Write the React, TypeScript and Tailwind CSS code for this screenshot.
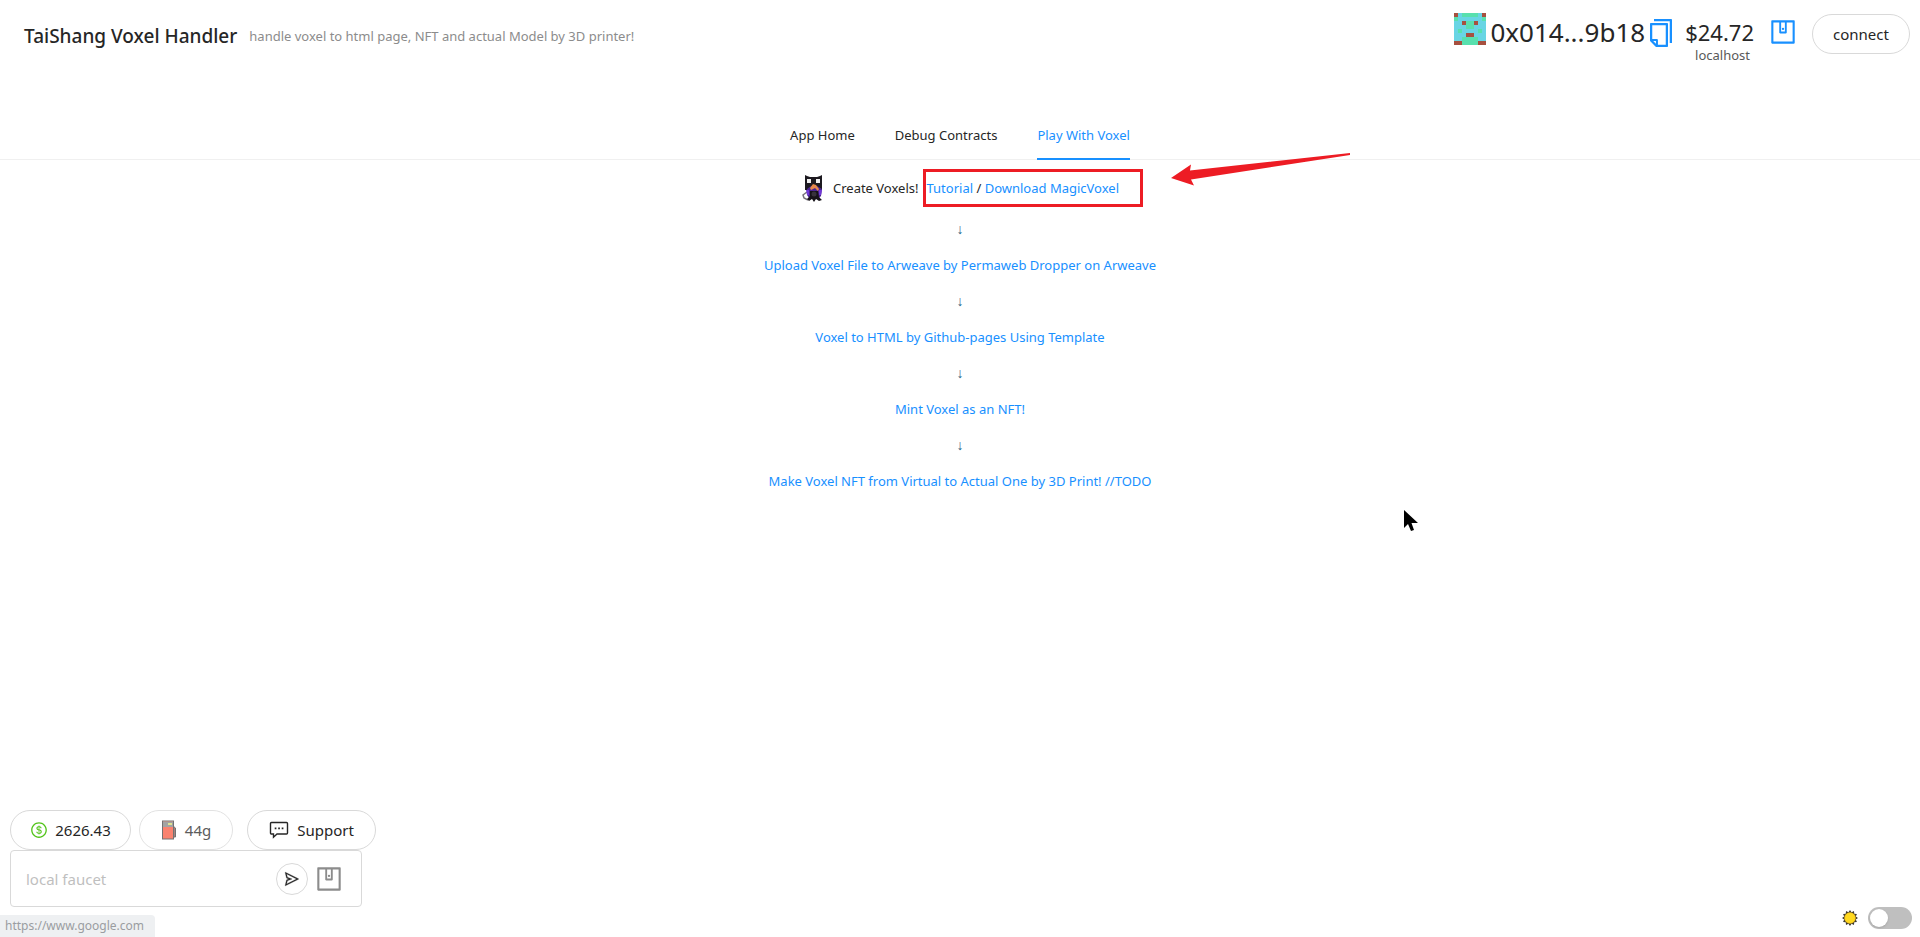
import { useState } from "react";
import type { ReactNode } from "react";
import { AiOutlineCopy, AiOutlineDollar, AiOutlineSend, AiOutlineWallet } from "react-icons/ai";

const FACE_ROWS = [
  "RTGGGGTR",
  "GTTTTTTG",
  "TTRGGRTT",
  "TTTGGTTT",
  "TGTTTTGT",
  "TTTRRTTT",
  "TTGGGGTT",
  "RRGGGGRR",
];
const FACE_COLORS: Record<string, string> = { R: "#a6503f", T: "#68d5e4", G: "#58e0ae" };

function Blockie() {
  return (
    <svg className="mt-[13px] size-8" viewBox="0 0 8 8" shapeRendering="crispEdges" aria-hidden="true">
      {FACE_ROWS.flatMap((row, y) =>
        row.split("").map((c, x) => (
          <rect key={`${x}-${y}`} x={x} y={y} width="1" height="1" fill={FACE_COLORS[c]} />
        )),
      )}
    </svg>
  );
}

function CatIcon() {
  return (
    <svg className="h-8 w-6" viewBox="0 0 24 32" aria-hidden="true">
      <path d="M6 20l-4 3 1 3 4 2" fill="none" stroke="#77727c" strokeWidth="1.500" />
      <path d="M4 3l2 1 3 1h7l3-1 2-1v15H4z" fill="#1d1a20" />
      <path d="M6 17l4-3h6l5 3-1 7-2 2H8l-2-3z" fill="#4b2493" />
      <path d="M9 16l3-4 3 1 3 4-1 2-3-3-4 2z" fill="#e88a4c" />
      <path d="M9 19h8l1 6 3 3-3 1-3-2-2 3-2-3-3 2-2-2 3-3z" fill="#171319" />
      <path d="M6 7h4v4H6zM15 7h4v4h-4z" fill="#f1f1f1" />
      <path d="M5 18h3v5H6zM18 18h3l-1 5h-2z" fill="#7138d6" />
      <circle cx="13" cy="22" r="2.500" fill="#38323c" />
    </svg>
  );
}

function GasPump() {
  return (
    <svg className="h-5 w-4" viewBox="0 0 16 20" aria-hidden="true">
      <path d="M12 6l2.500 2v9H12" fill="#8b5a55" stroke="#444" />
      <rect x="1.500" y="1" width="11" height="18" fill="#f9593f" stroke="#444" />
      <rect x="2" y="1.500" width="10" height="5.500" fill="#858585" />
      <rect x="7" y="3" width="4" height="2" fill="#d5dc6a" />
    </svg>
  );
}

function MessageIcon() {
  return (
    <svg className="size-5" viewBox="0 0 20 20" aria-hidden="true">
      <path
        d="M2.500 2.500h15a1 1 0 0 1 1 1v9.500a1 1 0 0 1-1 1H8L4.500 17.200V14h-2a1 1 0 0 1-1-1V3.500a1 1 0 0 1 1-1Z"
        fill="none"
        stroke="currentColor"
        strokeWidth="1.400"
      />
      <path d="M5.700 7.500h1.700v1.700H5.700zM9.200 7.500h1.700v1.700H9.200zM12.700 7.500h1.700v1.700h-1.700z" fill="currentColor" />
    </svg>
  );
}

function SunIcon() {
  const points = Array.from({ length: 24 }, (_, i) => {
    const r = i % 2 ? 6 : 8;
    const a = (i * Math.PI) / 12;
    return `${8 + r * Math.cos(a)},${8 + r * Math.sin(a)}`;
  }).join(" ");
  return (
    <svg className="size-4" viewBox="0 0 16 16" aria-hidden="true">
      <polygon points={points} fill="#3d3a30" />
      <circle cx="8" cy="8" r="5.800" fill="#e9b91c" />
      <circle cx="8" cy="8" r="5" fill="#ffd91f" />
    </svg>
  );
}

function Pill({ children, className }: { children: ReactNode; className: string }) {
  return (
    <button
      type="button"
      className={`flex h-10 items-center justify-center rounded-full border border-[#d9d9d9] bg-white text-[15px] ${className}`}
    >
      {children}
    </button>
  );
}

const TABS = ["App Home", "Debug Contracts", "Play With Voxel"];
const STEPS = [
  "Upload Voxel File to Arweave by Permaweb Dropper on Arweave",
  "Voxel to HTML by Github-pages Using Template",
  "Mint Voxel as an NFT!",
  "Make Voxel NFT from Virtual to Actual One by 3D Print! //TODO",
];

export default function App() {
  const [dark, setDark] = useState(false);
  return (
    <div className="relative flex min-h-screen flex-col bg-white font-['Noto_Sans','Open_Sans',sans-serif] text-[13px] leading-[22px] text-[#262626]">
      <header className="flex h-[110px] items-start justify-between pr-[10px] pl-6">
        <div className="flex items-center gap-3 pt-5">
          <h1 className="text-[19px] leading-8 font-medium">TaiShang Voxel Handler</h1>
          <p className="text-[#8c8c8c]">handle voxel to html page, NFT and actual Model by 3D printer!</p>
        </div>
        <div className="flex items-start">
          <div className="flex items-start gap-1">
            <Blockie />
            <span className="mt-4 text-[26px] leading-8">0x014...9b18</span>
          </div>
          <button type="button" aria-label="Copy address" className="mt-[17px] text-[#1890ff]">
            <AiOutlineCopy className="size-8" />
          </button>
          <div className="flex flex-col items-end pt-4 pl-2">
            <span className="text-[22px] leading-8">$24.72</span>
            <span className="-mt-1 pr-1 text-[#595959]">localhost</span>
          </div>
          <button type="button" aria-label="Wallet" className="mt-[17px] ml-[14px] text-[#1890ff]">
            <AiOutlineWallet className="size-[30px] -rotate-90" />
          </button>
          <div className="ml-[14px] pt-[14px]">
            <Pill className="w-[98px]">connect</Pill>
          </div>
        </div>
      </header>

      <nav className="flex h-[50px] justify-center gap-10 border-b border-[#f0f0f0]">
        {TABS.map((tab) => (
          <a
            key={tab}
            href="#"
            className={
              tab === "Play With Voxel"
                ? "-mb-px border-b-2 border-[#1890ff] pt-[14px] text-[#1890ff]"
                : "pt-[14px]"
            }
          >
            {tab}
          </a>
        ))}
      </nav>

      <main className="flex flex-col items-center">
        <div className="flex h-[58px] items-center pb-[2px]">
          <CatIcon />
          <span className="ml-2">Create Voxels!</span>
          <span className="relative ml-2">
            <a href="#" className="text-[#1890ff]">Tutorial</a> /{" "}
            <a href="#" className="text-[#1890ff]">Download MagicVoxel</a>
            <span className="pointer-events-none absolute -top-2 -right-6 -bottom-2 -left-1 border-3 border-[#ed1c24]" />
            <svg
              className="pointer-events-none absolute -top-[25px] left-full ml-[50px] h-9 w-[184px]"
              viewBox="0 0 184 36"
              aria-hidden="true"
            >
              <path d="M2 26L22 12.500L21 18.500L181 1V3L22 27.500L25 33.500Z" fill="#ed1c24" />
            </svg>
          </span>
        </div>
        {STEPS.map((step) => (
          <div key={step} className="flex flex-col items-center">
            <span className="h-9 font-['Liberation_Sans',sans-serif] text-sm leading-[22px] text-[#1f5f86]">↓</span>
            <a href="#" className="h-9 text-[#1890ff]">{step}</a>
          </div>
        ))}
      </main>

      <svg className="absolute top-[509px] left-[1404px] h-[23px] w-4" viewBox="0 0 16 23" aria-hidden="true">
        <path d="M0 1V19L4 15L7 22L10 21L7.500 14H14Z" fill="#000" />
      </svg>

      <footer className="mt-auto flex items-end justify-between">
        <div>
          <div className="flex pl-[10px]">
            <Pill className="w-[121px] gap-[7px]">
              <AiOutlineDollar className="size-[18px] text-[#52c41a]" />
              2626.43
            </Pill>
            <Pill className="ml-2 w-[94px] gap-2 opacity-75">
              <GasPump />
              44g
            </Pill>
            <Pill className="ml-[14px] w-[129px] gap-2">
              <MessageIcon />
              Support
            </Pill>
          </div>
          <div className="ml-[10px] flex h-[57px] w-[352px] items-center rounded border border-[#d9d9d9] pr-[17px] pl-[15px]">
            <input
              aria-label="Faucet address"
              placeholder="local faucet"
              className="min-w-0 flex-1 text-[15px] outline-none placeholder:text-[#bfbfbf]"
            />
            <button
              type="button"
              aria-label="Send"
              className="flex size-8 items-center justify-center rounded-full border border-[#d9d9d9]"
            >
              <AiOutlineSend className="size-4" strokeWidth="16" />
            </button>
            <button type="button" aria-label="Faucet wallet" className="ml-[6px] text-[#8c8c8c]">
              <AiOutlineWallet className="size-[30px] -rotate-90" />
            </button>
          </div>
          <div className="mt-2 flex h-[22px] w-[155px] items-center rounded-tr bg-[#eef0f2] pl-[5px] text-xs text-[#9a9da1]">
            https://www.google.com
          </div>
        </div>
        <div className="flex items-center gap-[10px] pr-2 pb-2">
          <SunIcon />
          <button
            type="button"
            role="switch"
            aria-label="Dark theme"
            aria-checked={dark}
            onClick={() => setDark(!dark)}
            className="flex h-[22px] w-11 items-center rounded-full bg-[#bfbfbf] p-[2px]"
          >
            <span className="size-[18px] rounded-full bg-white shadow" />
          </button>
        </div>
      </footer>
    </div>
  );
}
